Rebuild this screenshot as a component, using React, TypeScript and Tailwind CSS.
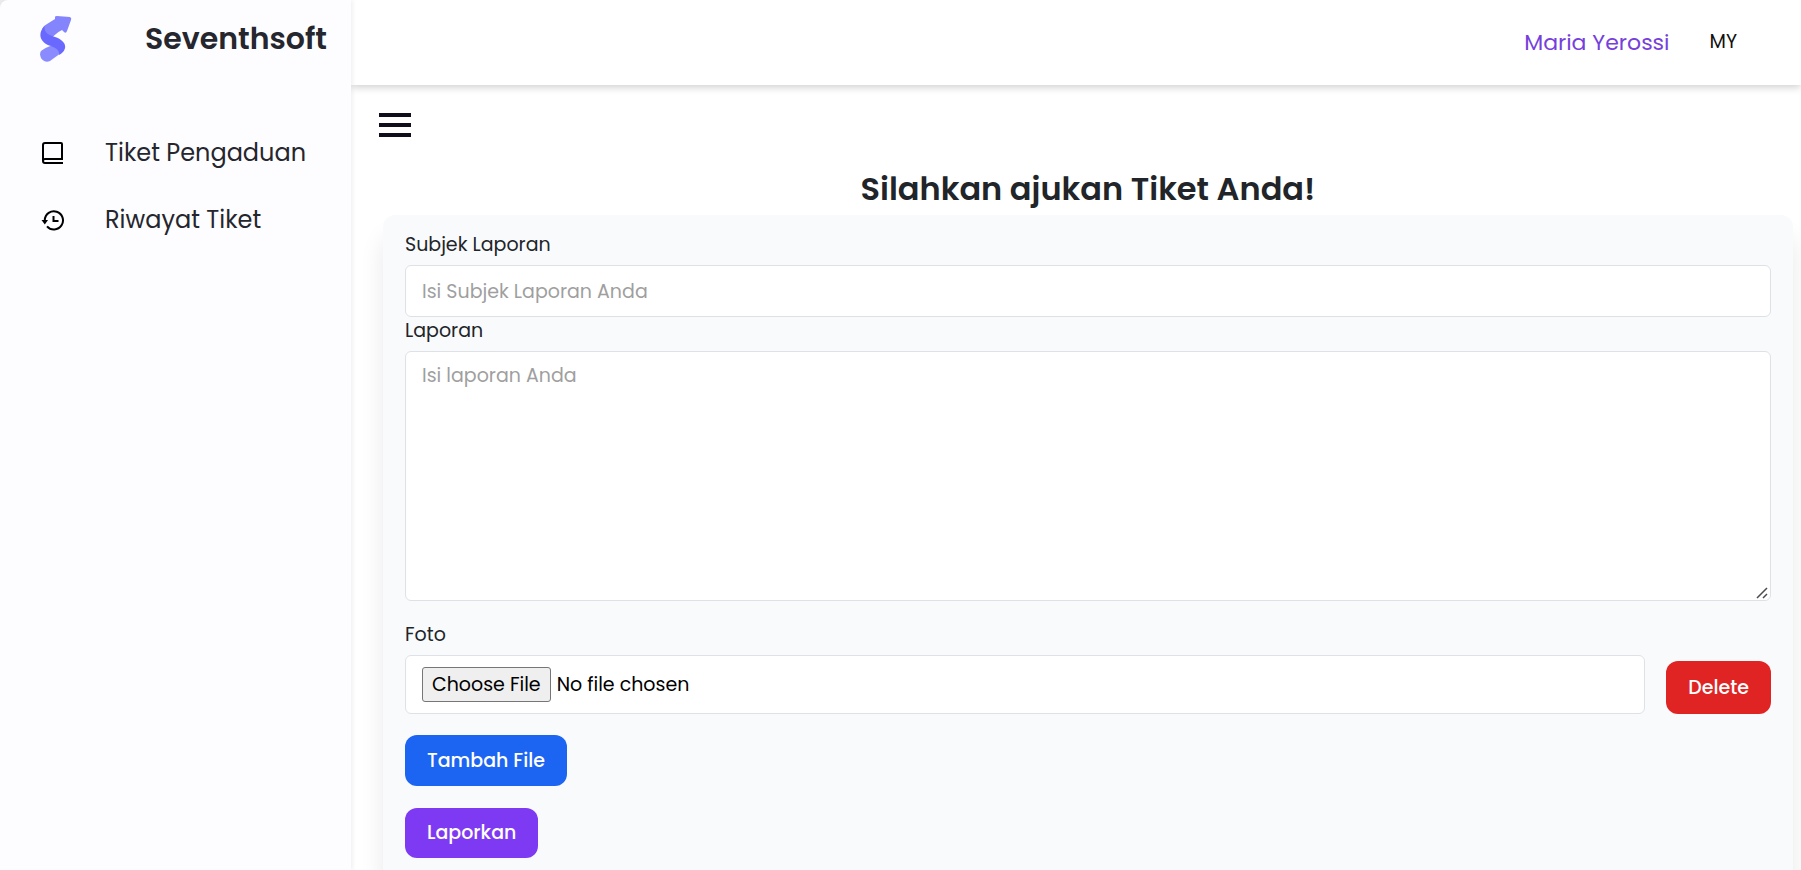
import React from 'react';

function Logo() {
  return (
    <svg viewBox="0 0 32 48" className="h-12 w-8" aria-hidden="true">
      <path d="M18 28L21 38L10 46C3 49-2 41 1 36Q4 33 18 28Z" fill="#8a8bff" />
      <path d="M2 14Q3 11 7 9L15 4L15 2Q15 1 17 1L30 2Q32 3 31 5L27 16Q26 19 24 17L22 15Q18 17 16 19L10 24Z" fill="#8485fd" />
      <path d="M4.500 11C4 18 9 20 15 22C24 25 28 31 23 37Q21 39 19 40C20 35 16 33 11 31C0 28-3 19 4.500 11Z" fill="#6968ff" />
    </svg>
  );
}

function BookIcon() {
  return (
    <svg viewBox="0 0 24 24" className="size-6" fill="none" stroke="#000" strokeWidth="2" aria-hidden="true">
      <path d="M22 18H4Q2 18 2 20T4 22H22M2 20V4Q2 2 4 2H20Q21 2 21 3V18" />
    </svg>
  );
}

function HistoryIcon() {
  return (
    <svg viewBox="0 0 24 24" className="size-6" fill="none" stroke="#000" strokeWidth="2" aria-hidden="true">
      <path d="M3.800 13.500V12A9.100 9.100 0 1 1 6 18.300" />
      <path d="M12.500 8V13H17.500" />
      <path d="M0.500 12H7L3.800 16.500Z" fill="#000" stroke="none" />
    </svg>
  );
}

function ResizeGrip() {
  return (
    <svg
      viewBox="0 0 14 14"
      className="pointer-events-none absolute right-px bottom-px size-3.5 rounded-br-md bg-white"
      fill="none"
      stroke="#4a4a50"
      strokeWidth="1.500"
      aria-hidden="true"
    >
      <path d="M1 12L11 2M7 12L11 8" />
    </svg>
  );
}

const navStyle = 'flex h-14 items-center gap-10 pl-[41px] text-2xl text-[#25262e]';
const labelStyle = 'block text-[19px] leading-7 text-[#212529]';
const fieldStyle =
  'block w-full rounded-md border border-[#dee2e6] bg-white px-4 text-[19px] leading-7 text-black placeholder:text-[#9f9f9f] outline-none';
const buttonStyle = 'rounded-xl px-[22px] text-[19px] leading-7 font-medium text-white';

export default function App() {
  return (
    <div className="flex h-screen overflow-hidden bg-white font-[Poppins,Inter,sans-serif] text-[#212529]">
      <aside className="z-10 w-[351px] shrink-0 bg-[#e9e9ee]">
        <div className="h-full rounded-tl-lg bg-[#fdfdff] shadow-[2px_0_4px_rgba(0,0,0,0.06)]">
          <div className="flex items-center justify-between pt-[15px] pr-6 pl-10">
            <Logo />
            <span className="text-3xl font-semibold text-[#25262e]">Seventhsoft</span>
          </div>
          <nav className="mt-[62px] flex flex-col gap-[11px]">
            <a href="#tiket" className={navStyle}>
              <BookIcon />
              Tiket Pengaduan
            </a>
            <a href="#riwayat" className={navStyle}>
              <HistoryIcon />
              Riwayat Tiket
            </a>
          </nav>
        </div>
      </aside>

      <div className="flex min-w-0 flex-1 flex-col">
        <header className="flex h-[85px] shrink-0 items-center justify-end gap-10 pr-16 shadow-[0_2px_8px_rgba(0,0,0,0.2)]">
          <span className="text-[22px] text-[#7540dc]">Maria Yerossi</span>
          <span className="text-[19px] text-[#111]">MY</span>
        </header>

        <main className="pt-7 pr-2 pl-7">
          <button type="button" aria-label="Menu" className="flex w-8 flex-col gap-1.5">
            <span className="h-1 w-full bg-[#110e1b]" />
            <span className="h-1 w-full bg-[#110e1b]" />
            <span className="h-1 w-full bg-[#110e1b]" />
          </button>
          <h1 className="mt-8 ml-1 text-center text-[32px] leading-10 font-semibold">Silahkan ajukan Tiket Anda!</h1>

          <form className="mt-1.5 ml-1 rounded-xl bg-[#f9fafc] px-[22px] pt-4 pb-6 shadow-[0_22px_25px_rgba(0,0,0,0.09)]">
            <label htmlFor="subjek" className={labelStyle}>Subjek Laporan</label>
            <input id="subjek" type="text" placeholder="Isi Subjek Laporan Anda" className={`${fieldStyle} mt-1.5 h-[52px]`} />
            <label htmlFor="laporan" className={labelStyle}>Laporan</label>
            <div className="relative mt-1.5">
              <textarea id="laporan" placeholder="Isi laporan Anda" className={`${fieldStyle} h-[250px] resize-y py-2.5`} />
              <ResizeGrip />
            </div>

            <div className="mt-5 flex items-end gap-[21px]">
              <div className="min-w-0 flex-1">
                <label htmlFor="foto" className={labelStyle}>Foto</label>
                <input
                  id="foto"
                  type="file"
                  className={`${fieldStyle} mt-1.5 h-[59px] py-[11px] file:mr-1.5 file:h-[35px] file:rounded-[3px] file:border file:border-solid file:border-[#767676] file:bg-[#efefef] file:px-[9px]`}
                />
              </div>
              <button type="button" className={`${buttonStyle} h-[53px] bg-[#e02424]`}>Delete</button>
            </div>

            <button type="button" className={`${buttonStyle} mt-[21px] block h-[51px] bg-[#1c64f2]`}>Tambah File</button>
            <button type="submit" className={`${buttonStyle} mt-[22px] block h-[50px] bg-[#7e3af2]`}>Laporkan</button>
          </form>
        </main>
      </div>
    </div>
  );
}
